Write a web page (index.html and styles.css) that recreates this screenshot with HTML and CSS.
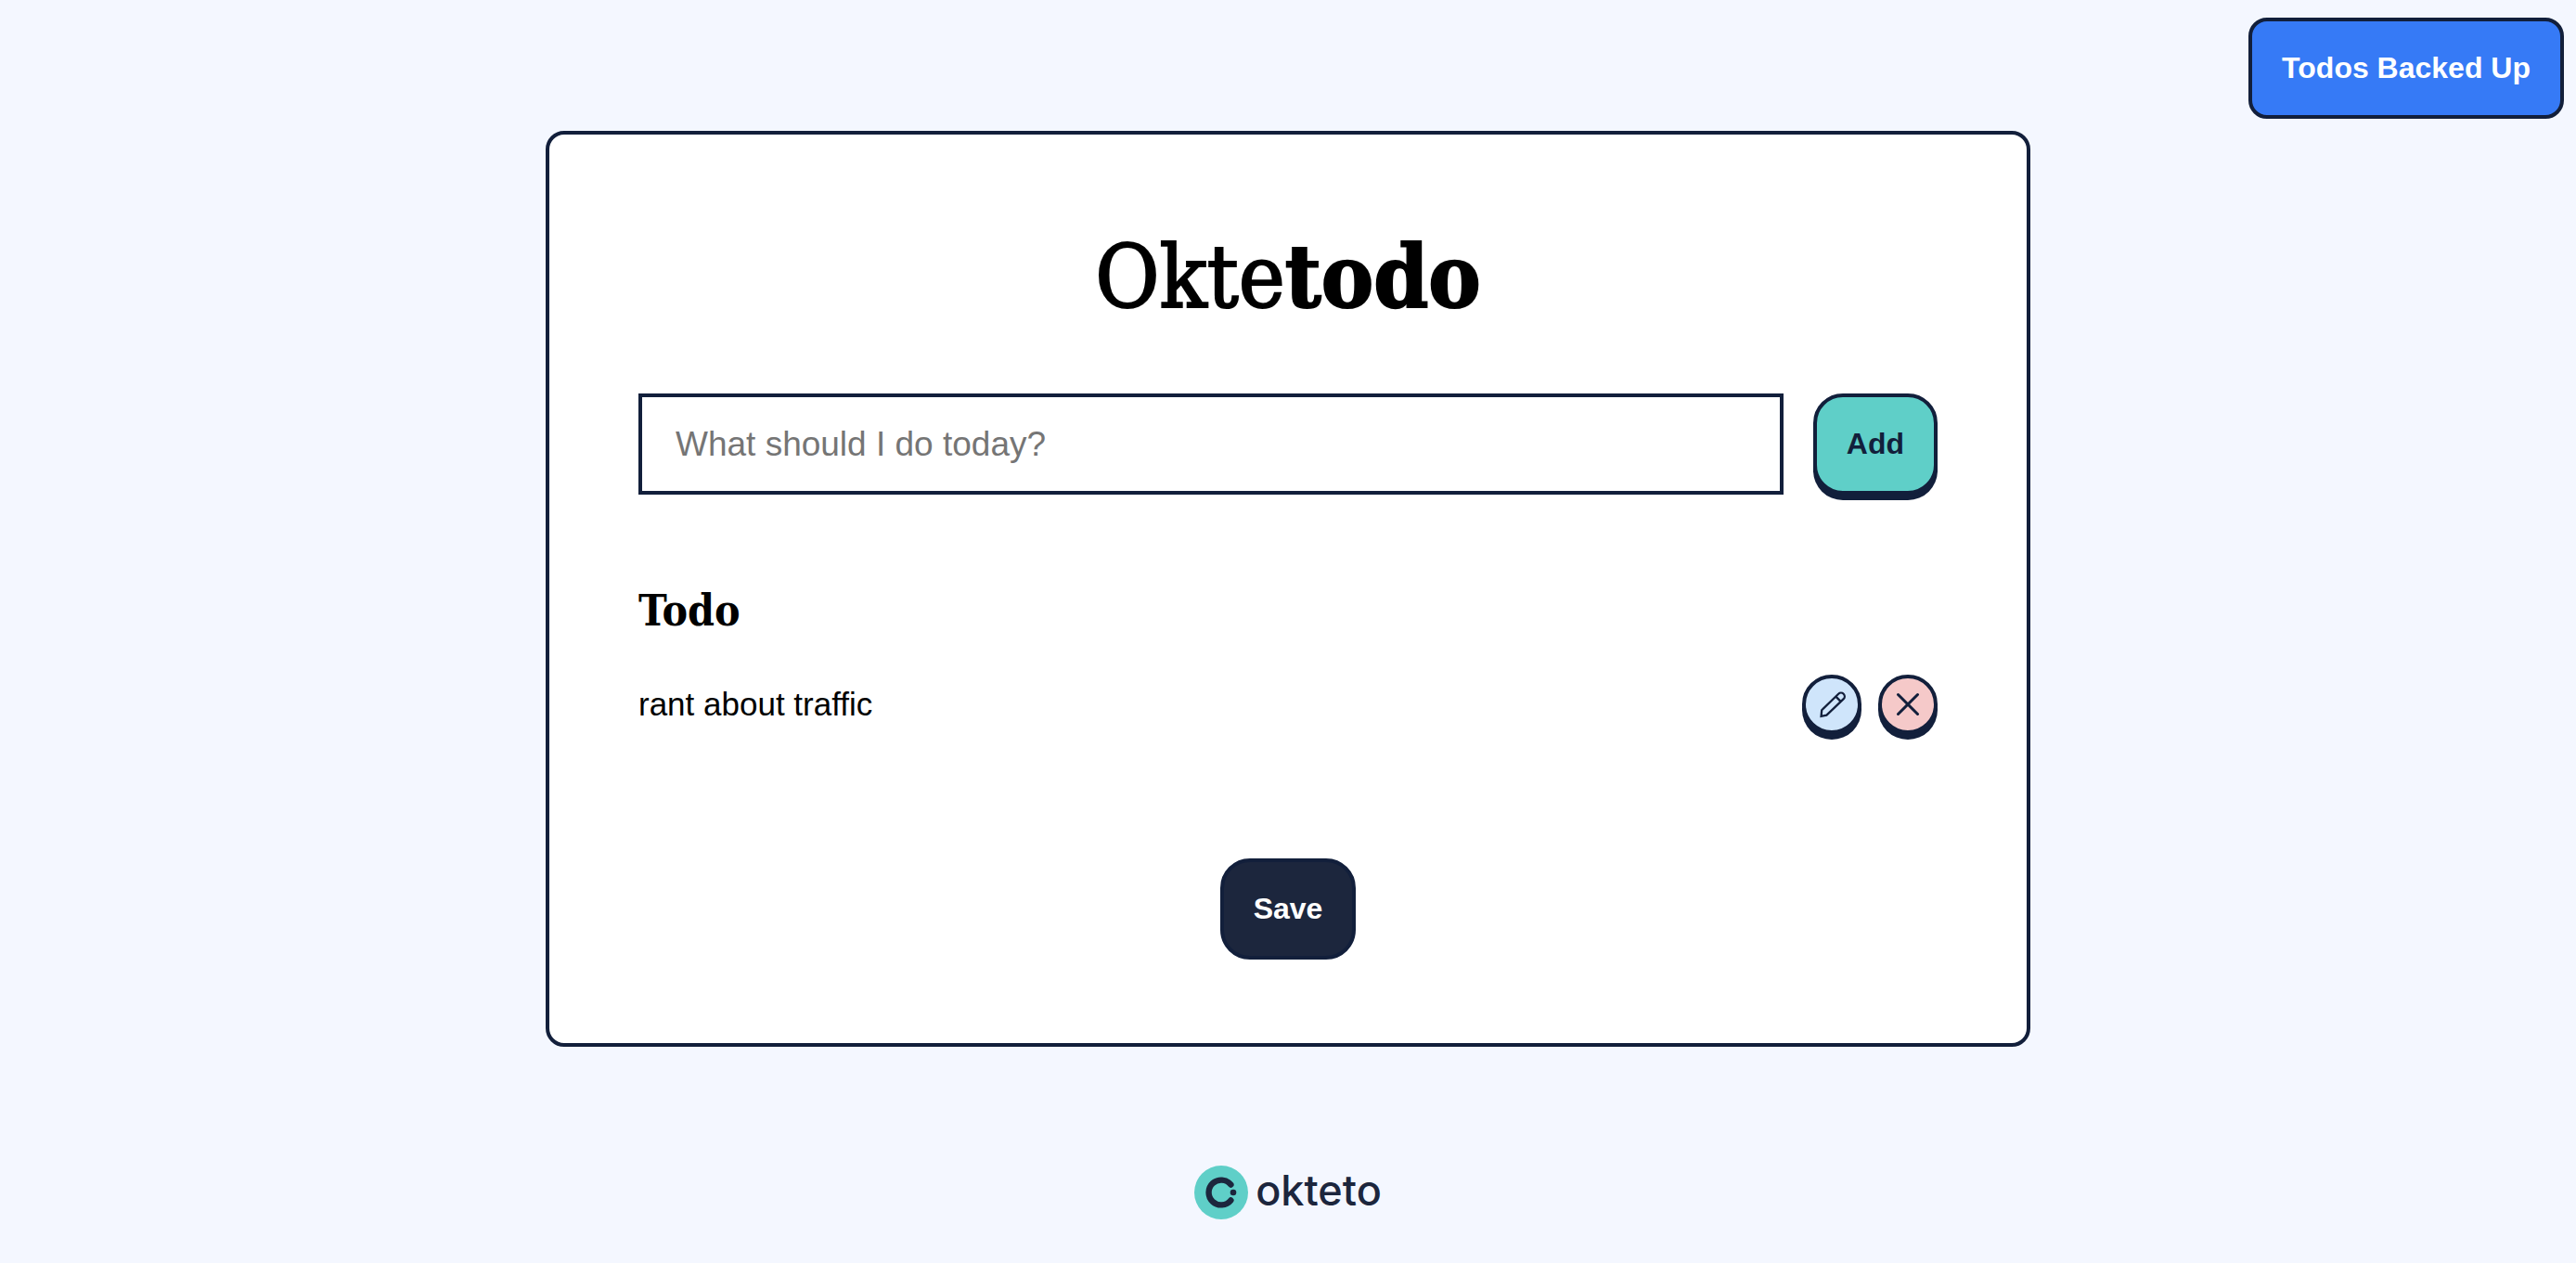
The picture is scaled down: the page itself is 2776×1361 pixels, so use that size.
FILE: index.html
```html
<!DOCTYPE html>
<html lang="en">
<head>
  <meta charset="utf-8">
  <meta name="viewport" content="width=device-width, initial-scale=1">
  <title>Oktetodo</title>
  <link rel="stylesheet" href="styles.css">
</head>
<body>
  <div class="toast" role="status">Todos Backed Up</div>

  <main class="card">
    <h1 class="title">Okte<strong>todo</strong></h1>

    <form class="add-form">
      <input class="add-input" type="text" aria-label="New todo" placeholder="What should I do today?">
      <button class="button button-add" type="submit">Add</button>
    </form>

    <section class="todos">
      <h2 class="section-title">Todo</h2>
      <ul class="todo-list">
        <li class="todo">
          <span class="todo-text">rant about traffic</span>
          <button class="icon-button icon-button-edit" type="button" aria-label="Edit">
            <svg width="32" height="32" viewBox="0 0 32 32" fill="none" stroke="currentColor" stroke-width="2.3" aria-hidden="true">
              <path d="M5.200 22.200 23.200 4.700a3.900 3.900 0 0 1 5.500 0 3.900 3.900 0 0 1 0 5.500L10.400 27.700 4.600 28.800Z"/>
              <path d="M20.400 7.600 25.600 12.900"/>
            </svg>
          </button>
          <button class="icon-button icon-button-delete" type="button" aria-label="Delete">
            <svg width="32" height="32" viewBox="0 0 32 32" fill="none" stroke="currentColor" stroke-width="3" stroke-linecap="round" aria-hidden="true">
              <path d="M5.500 5.500 26.500 26.500M26.500 5.500 5.500 26.500"/>
            </svg>
          </button>
        </li>
      </ul>
    </section>

    <button class="button button-save" type="button">Save</button>
  </main>

  <footer class="footer">
    <a class="logo" href="#">
      <svg width="58" height="58" viewBox="0 0 58 58" fill="none" aria-hidden="true">
        <circle cx="29" cy="29" r="29" fill="#5fcfc8"/>
        <path d="M39.400 20.600A13.400 13.400 0 1 0 39.400 37.400" stroke="#1c263d" stroke-width="6.400" stroke-linecap="round"/>
        <circle cx="42" cy="29" r="3.300" fill="#1c263d"/>
      </svg>
      <span class="logo-name">okteto</span>
    </a>
  </footer>
</body>
</html>
```
FILE: styles.css
```css
:root {
  --navy: #121f3b;
  --ink: #1c263d;
  --teal: #5fcfc8;
  --blue: #367af6;
  --page: #f4f7ff;
}

* {
  box-sizing: border-box;
}

body {
  margin: 0;
  padding: 141px 32px 48px;
  min-height: 100vh;
  display: flex;
  flex-direction: column;
  align-items: center;
  background: var(--page);
  color: #000;
  font-family: "Liberation Sans", Arial, sans-serif;
}

.toast {
  position: absolute;
  top: 19px;
  right: 13px;
  padding: 32px;
  border: 4px solid var(--navy);
  border-radius: 20px;
  background: var(--blue);
  color: #fff;
  font-size: 32px;
  font-weight: 700;
  line-height: 37px;
}

.card {
  width: 100%;
  max-width: 1600px;
  padding: 96px 96px 90px;
  display: flex;
  flex-direction: column;
  border: 4px solid var(--navy);
  border-radius: 20px;
  background: #fff;
}

.title,
.section-title {
  margin: 0;
  font-family: "DejaVu Serif Condensed", "DejaVu Serif", serif;
}

.title {
  font-size: 94px;
  font-weight: 400;
  line-height: 114px;
  text-align: center;
  -webkit-text-stroke: 2px #000;
}

.add-form {
  margin-top: 68px;
  display: flex;
  gap: 32px;
}

.add-input {
  flex: 1;
  min-width: 0;
  padding: 0 36px;
  border: 4px solid var(--navy);
  border-radius: 0;
  background: #fff;
  font: 37px "Liberation Sans", Arial, sans-serif;
}

.add-input::placeholder {
  color: #757575;
}

.button {
  padding: 32px;
  border: 4px solid var(--navy);
  border-radius: 32px;
  font: 700 32px/37px "Liberation Sans", Arial, sans-serif;
}

.button-add {
  background: var(--teal);
  color: var(--navy);
  box-shadow: 0 6px 0 var(--navy);
}

.button-save {
  align-self: center;
  margin-top: 134px;
  background: var(--ink);
  color: #fff;
}

.todos {
  margin-top: 99px;
}

.section-title {
  font-size: 46px;
  font-weight: 700;
  line-height: 52px;
}

.todo-list {
  margin: 43px 0 0;
  padding: 0;
  list-style: none;
}

.todo {
  display: flex;
  align-items: center;
  gap: 18px;
}

.todo-text {
  flex: 1;
  font-size: 35px;
  line-height: 40px;
}

.icon-button {
  width: 64px;
  height: 64px;
  padding: 0;
  display: flex;
  align-items: center;
  justify-content: center;
  border: 4px solid var(--navy);
  border-radius: 50%;
  box-shadow: 0 6px 0 var(--navy);
  color: var(--navy);
}

.icon-button-edit {
  background: #cfe5fb;
}

.icon-button-delete {
  background: #f5c9c9;
}

.footer {
  margin-top: 128px;
}

.logo {
  display: flex;
  align-items: center;
  gap: 8px;
  color: var(--ink);
  text-decoration: none;
}

.logo-name {
  padding-bottom: 4px;
  font: 500 45px/52px Inter, "Open Sans", sans-serif;
}
```
